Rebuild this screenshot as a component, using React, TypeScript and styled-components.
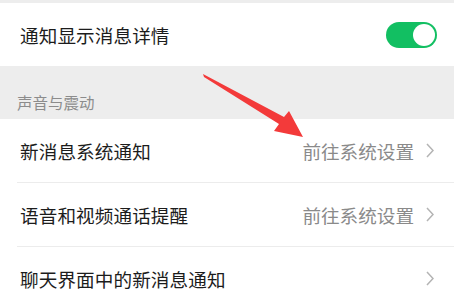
import React from "react";
import styled, { createGlobalStyle } from "styled-components";

const GlobalStyle = createGlobalStyle`
  html, body {
    margin: 0;
    padding: 0;
    background: #ededed;
  }
  body {
    font-family: "Noto Sans CJK SC", "Noto Sans", sans-serif;
  }
`;

type Item = { label: string; value?: string; arrow?: boolean };

const soundItems: Item[] = [
  { label: "新消息系统通知", value: "前往系统设置", arrow: true },
  { label: "语音和视频通话提醒", value: "前往系统设置", arrow: true },
  { label: "聊天界面中的新消息通知", arrow: true },
];

const App = () => {
  return (
    <>
      <GlobalStyle />
      <Page>
        <TopGap />
        <Group>
          <Row>
            <Label>通知显示消息详情</Label>
            <Switch $on>
              <Knob />
            </Switch>
          </Row>
        </Group>

        <SectionTitle>声音与震动</SectionTitle>

        <Group>
          {soundItems.map((item, i) => (
            <React.Fragment key={item.label}>
              {i > 0 && <Divider />}
              <Row>
                <Label>{item.label}</Label>
                <Right>
                  {item.value && <Value>{item.value}</Value>}
                  {item.arrow && (
                    <Chevron viewBox="0 0 8 15">
                      <path d="M1 1 L7 7.5 L1 14" />
                    </Chevron>
                  )}
                </Right>
              </Row>
            </React.Fragment>
          ))}
        </Group>

        <Pointer viewBox="0 0 454 300">
          <polygon points="203,74 284,117 289,111 303,137 274,131 279,124 204,77" />
        </Pointer>
      </Page>
    </>
  );
};

export default App;

const Page = styled.div`
  position: relative;
  width: 454px;
  height: 300px;
  overflow: hidden;
  background: #ededed;
`;

const TopGap = styled.div`
  height: 3px;
`;

const Group = styled.div`
  background: #ffffff;
`;

const Row = styled.div`
  height: 63px;
  display: flex;
  align-items: center;
  justify-content: space-between;
  padding: 0 17px 0 20px;
`;

const Label = styled.span`
  font-size: 18.6px;
  color: #1c1c1c;
  letter-spacing: 0.1px;
`;

const Right = styled.div`
  display: flex;
  align-items: center;
  gap: 12px;
`;

const Value = styled.span`
  font-size: 18.6px;
  color: #8a8a8a;
`;

const Chevron = styled.svg`
  width: 8px;
  height: 15px;
  margin-right: 3px;
  fill: none;
  stroke: #b4b4b4;
  stroke-width: 1.5;
`;

const Divider = styled.div`
  height: 1px;
  margin-left: 17px;
  background: #ececec;
`;

const SectionTitle = styled.div`
  height: 53px;
  box-sizing: border-box;
  display: flex;
  align-items: flex-end;
  padding: 0 0 6px 17px;
  font-size: 15.5px;
  line-height: 22px;
  color: #8c8c8c;
`;

const Switch = styled.div<{ $on?: boolean }>`
  width: 51px;
  height: 26px;
  border-radius: 13px;
  background: ${(p) => (p.$on ? "#12bf62" : "#e5e5e5")};
  display: flex;
  align-items: center;
  justify-content: ${(p) => (p.$on ? "flex-end" : "flex-start")};
  padding: 0 2px;
  box-sizing: border-box;
`;

const Knob = styled.div`
  width: 22px;
  height: 22px;
  border-radius: 50%;
  background: #ffffff;
`;

const Pointer = styled.svg`
  position: absolute;
  left: 0;
  top: 0;
  width: 454px;
  height: 300px;
  pointer-events: none;
  fill: #f33a3a;
`;
